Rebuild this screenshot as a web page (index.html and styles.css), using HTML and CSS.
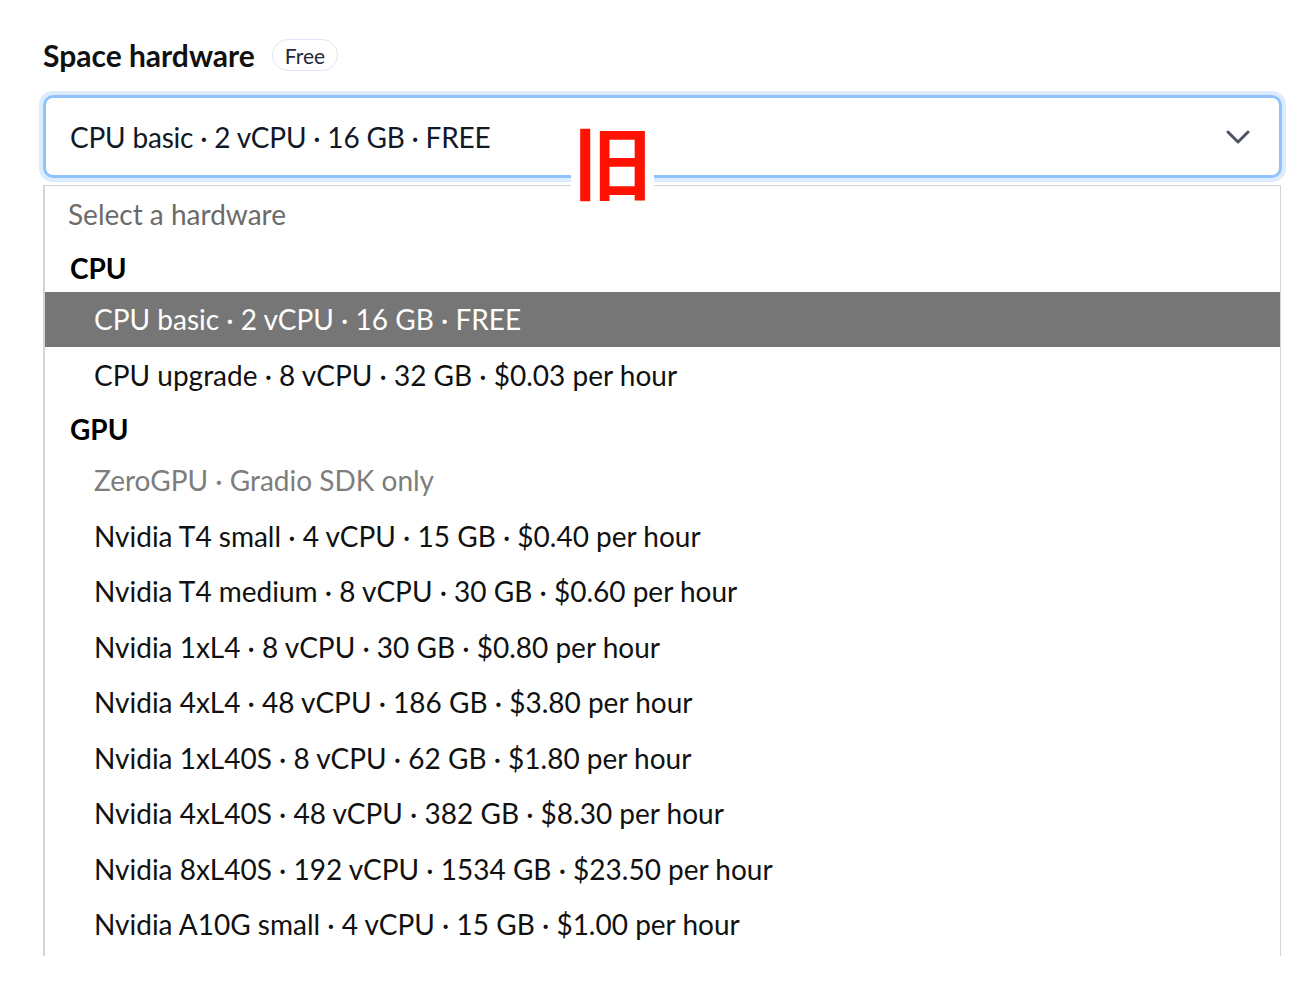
FILE: index.html
```html
<!DOCTYPE html>
<html lang="en">
<head>
<meta charset="utf-8">
<title>Space hardware</title>
<link rel="stylesheet" href="styles.css">
</head>
<body>
<div class="page">
  <div class="header">
    <h2 class="title">Space hardware</h2>
    <span class="badge">Free</span>
  </div>
  <div class="field">
    <div class="select">
      <span class="value">CPU basic · 2 vCPU · 16 GB · FREE</span>
      <svg class="chevron" width="24" height="14" viewBox="0 0 24 14"><path d="M2 2 L12 12 L22 2" fill="none" stroke="#4b5563" stroke-width="3" stroke-linecap="round" stroke-linejoin="round"/></svg>
    </div>
    <span class="stamp">旧</span>
    <div class="listbox">
      <div class="opt placeholder">Select a hardware</div>
      <div class="group">CPU</div>
      <div class="opt selected">CPU basic · 2 vCPU · 16 GB · FREE</div>
      <div class="opt">CPU upgrade · 8 vCPU · 32 GB · $0.03 per hour</div>
      <div class="group">GPU</div>
      <div class="opt disabled">ZeroGPU · Gradio SDK only</div>
      <div class="opt">Nvidia T4 small · 4 vCPU · 15 GB · $0.40 per hour</div>
      <div class="opt">Nvidia T4 medium · 8 vCPU · 30 GB · $0.60 per hour</div>
      <div class="opt">Nvidia 1xL4 · 8 vCPU · 30 GB · $0.80 per hour</div>
      <div class="opt">Nvidia 4xL4 · 48 vCPU · 186 GB · $3.80 per hour</div>
      <div class="opt">Nvidia 1xL40S · 8 vCPU · 62 GB · $1.80 per hour</div>
      <div class="opt">Nvidia 4xL40S · 48 vCPU · 382 GB · $8.30 per hour</div>
      <div class="opt">Nvidia 8xL40S · 192 vCPU · 1534 GB · $23.50 per hour</div>
      <div class="opt">Nvidia A10G small · 4 vCPU · 15 GB · $1.00 per hour</div>
    </div>
  </div>
</div>
</body>
</html>
```

FILE: styles.css
```css
html, body {
  margin: 0;
  padding: 0;
  background: #ffffff;
}

body {
  font-family: "Lato", "Noto Sans", sans-serif;
  color: #111827;
}

.page {
  padding: 39px 0 0 43px;
  width: 1239px;
}

.header {
  display: flex;
  align-items: center;
  gap: 17px;
  height: 32px;
}

.title {
  margin: 0;
  font-size: 30px;
  font-weight: 700;
  color: #111111;
  line-height: 32px;
}

.badge {
  display: inline-flex;
  align-items: center;
  height: 30px;
  padding: 0 12px;
  border: 1px solid #dde7f6;
  border-radius: 16px;
  font-size: 21px;
  color: #1f2937;
}

.field {
  position: relative;
  margin-top: 24px;
}

.select {
  display: flex;
  align-items: center;
  justify-content: space-between;
  box-sizing: border-box;
  height: 83px;
  padding: 0 29px 0 24px;
  border: 3px solid #90c2fb;
  border-radius: 10px;
  box-shadow: 0 0 0 4px #dcebfe;
  font-size: 28px;
  letter-spacing: -0.2px;
  color: #111827;
}

.chevron {
  display: block;
}

.stamp {
  position: absolute;
  left: 528px;
  top: 25px;
  padding: 0 2px;
  background: #ffffff;
  color: #ff1200;
  font-family: "Noto Sans CJK SC", sans-serif;
  font-weight: 700;
  font-size: 79px;
  line-height: 80px;
  z-index: 2;
}

.listbox {
  box-sizing: border-box;
  margin-top: 7px;
  width: 1238px;
  height: 771px;
  overflow: hidden;
  border: 1px solid #d4d4d4;
  border-bottom: none;
  border-left-width: 2px;
  background: #ffffff;
}

.opt {
  height: 55.5px;
  display: flex;
  align-items: center;
  padding-left: 49px;
  font-size: 28px;
  color: #111111;
  white-space: nowrap;
}

.opt.placeholder {
  padding-left: 23px;
  color: #6b6b6b;
}

.opt.selected {
  background: #767676;
  color: #ffffff;
}

.opt.disabled {
  color: #7d7d7d;
}

.group {
  height: 50px;
  display: flex;
  align-items: center;
  padding-left: 25px;
  padding-top: 3px;
  box-sizing: border-box;
  font-size: 28px;
  font-weight: 700;
  color: #000000;
}
```
